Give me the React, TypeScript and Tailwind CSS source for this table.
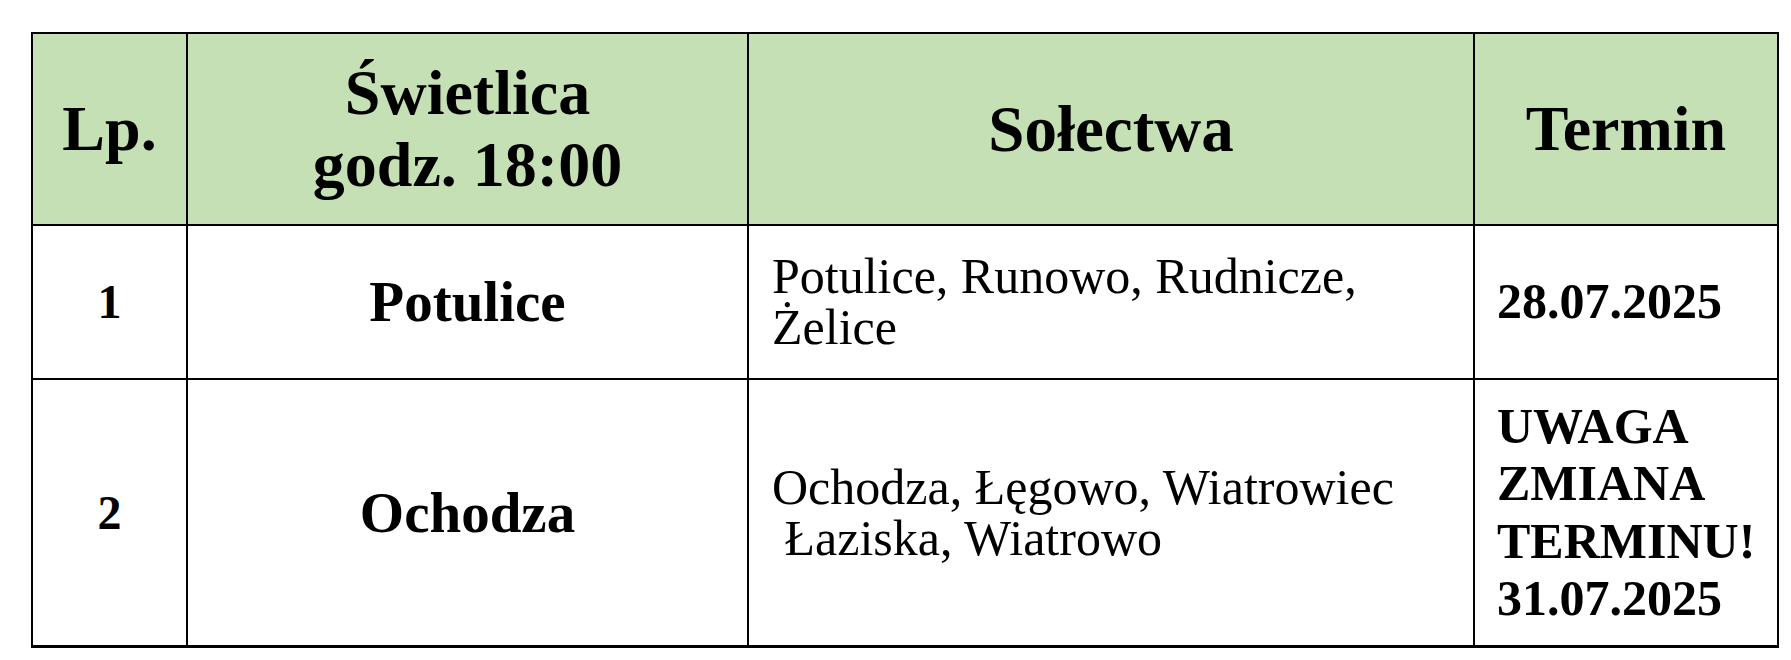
import React from "react";

const serif = { fontFamily: "'Liberation Serif', 'Times New Roman', Times, serif" };

export default function App() {
  const cell = "border-l-2 border-t-2 border-black flex items-center";
  return (
    <div className="w-[1791px] h-[660px] bg-white pl-[31px] pt-[32px]" style={serif}>
      <div className="grid grid-cols-[155px_561px_726px_304px] grid-rows-[192px_154px_267px] w-fit border-r-2 border-b-[3px] border-black text-black">
        {/* Header */}
        <div className={`${cell} justify-center bg-[#c5e0b4]`}>
          <span className="text-[64px] font-bold leading-[1.15]">Lp.</span>
        </div>
        <div className={`${cell} justify-center bg-[#c5e0b4]`}>
          <span className="text-[64px] font-bold leading-[1.13] text-center">
            Świetlica
            <br />
            godz. 18:00
          </span>
        </div>
        <div className={`${cell} justify-center bg-[#c5e0b4]`}>
          <span className="text-[65px] font-bold leading-[1.15]">Sołectwa</span>
        </div>
        <div className={`${cell} justify-center bg-[#c5e0b4]`}>
          <span className="text-[64px] font-bold leading-[1.15]">Termin</span>
        </div>

        {/* Row 1 */}
        <div className={`${cell} justify-center`}>
          <span className="text-[48px] font-bold leading-[1.15]">1</span>
        </div>
        <div className={`${cell} justify-center`}>
          <span className="text-[57px] font-bold leading-[1.15]">Potulice</span>
        </div>
        <div className={`${cell} pl-[23px]`}>
          <span className="text-[50px] leading-[51px] whitespace-nowrap">
            Potulice, Runowo, Rudnicze,
            <br />
            Żelice
          </span>
        </div>
        <div className={`${cell} pl-[22px]`}>
          <span className="text-[50px] font-bold leading-[1.15]">28.07.2025</span>
        </div>

        {/* Row 2 */}
        <div className={`${cell} justify-center`}>
          <span className="text-[48px] font-bold leading-[1.15]">2</span>
        </div>
        <div className={`${cell} justify-center`}>
          <span className="text-[57px] font-bold leading-[1.15]">Ochodza</span>
        </div>
        <div className={`${cell} pl-[23px]`}>
          <span className="text-[50px] leading-[51px] whitespace-pre">
            {"Ochodza, Łęgowo, Wiatrowiec\n Łaziska, Wiatrowo"}
          </span>
        </div>
        <div className={`${cell} pl-[22px]`}>
          <span className="text-[50px] font-bold leading-[1.15]">
            UWAGA
            <br />
            ZMIANA
            <br />
            TERMINU!
            <br />
            31.07.2025
          </span>
        </div>
      </div>
    </div>
  );
}
